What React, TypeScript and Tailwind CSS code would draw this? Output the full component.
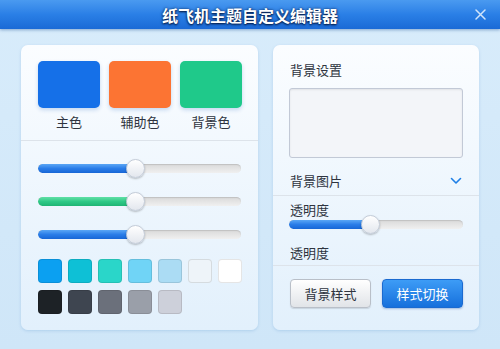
import React from "react";

const font = { fontFamily: '"Noto Sans CJK SC", "Noto Sans", sans-serif' };

function Slider({ pct, color }: { pct: number; color: "blue" | "green" }) {
  const fill =
    color === "blue"
      ? "bg-gradient-to-b from-[#5aa6f5] via-[#2a7de8] to-[#1766d6]"
      : "bg-gradient-to-b from-[#5fe0a6] via-[#2fc987] to-[#1fb574]";
  return (
    <div className="relative h-[19px] w-full flex items-center">
      <div className="relative h-[9px] w-full rounded-full bg-gradient-to-b from-[#d9d9d9] to-[#f0f0f0] shadow-[inset_0_1px_1px_rgba(0,0,0,0.12)] overflow-hidden">
        <div className={`absolute left-0 top-0 h-full rounded-full ${fill}`} style={{ width: `${pct}%` }} />
      </div>
      <div
        className="absolute top-0 h-[19px] w-[19px] -ml-[9.5px] rounded-full border border-[#c4ccd8] bg-gradient-to-b from-white to-[#e3e7ee] shadow-[0_1px_2px_rgba(0,0,0,0.25)]"
        style={{ left: `${pct}%` }}
      />
    </div>
  );
}

const row1 = ["#0ba0f1", "#0ec0d6", "#2ad6c9", "#70d4f6", "#abdcf4", "#eef4f9", "#ffffff"];
const row2 = ["#1d2226", "#3e4550", "#6b707b", "#9a9fa9", "#cdd0da"];

export default function App() {
  return (
    <div
      className="w-[500px] h-[349px] overflow-hidden flex flex-col bg-gradient-to-b from-[#d8ecfb] to-[#cfe6f8]"
      style={font}
    >
      {/* Title bar */}
      <div className="relative h-[29px] shrink-0 flex items-center justify-center bg-gradient-to-b from-[#4a9af0] via-[#2a7fe6] to-[#1a6ad6] shadow-[0_1px_3px_rgba(0,60,140,0.4)]">
        <span className="text-white font-bold text-[16px] leading-none [text-shadow:0_1px_2px_rgba(0,20,60,0.95),0_0_3px_rgba(0,20,60,0.7)]">
          纸飞机主题自定义编辑器
        </span>
        <svg className="absolute right-[14px] top-[9px]" width="11" height="11" viewBox="0 0 11 11">
          <path d="M1 1L10 10M10 1L1 10" stroke="#cfe4fb" strokeWidth="1.5" strokeLinecap="round" />
        </svg>
      </div>

      <div className="flex gap-[15px] pl-[21px] pt-[16px]">
        {/* Left panel */}
        <div className="w-[237px] h-[285px] rounded-[7px] bg-gradient-to-b from-[#fbfdff] to-[#e2f0fc] shadow-[0_1px_3px_rgba(80,140,200,0.25)] flex flex-col">
          <div className="flex gap-[9px] pl-[17px] pt-[16px]">
            {[
              { c: "bg-[#1570e8]", l: "主色" },
              { c: "bg-[#fc7433]", l: "辅助色" },
              { c: "bg-[#1fc98a]", l: "背景色" },
            ].map((s) => (
              <div key={s.l} className="flex flex-col items-center w-[62px]">
                <div className={`w-[62px] h-[47px] rounded-[5px] ${s.c} shadow-[0_2px_4px_rgba(0,80,180,0.2)]`} />
                <span className="mt-[5px] text-[13px] leading-[18px] text-[#2e3440]">{s.l}</span>
              </div>
            ))}
          </div>
          <div className="mt-[9px] h-px bg-[#dde3ea]" />
          <div className="flex flex-col gap-[14px] px-[17px] mt-[18px]">
            <Slider pct={48} color="blue" />
            <Slider pct={48} color="green" />
            <Slider pct={48} color="blue" />
          </div>
          <div className="flex flex-col gap-[7px] pl-[17px] mt-[15px]">
            <div className="flex gap-[6px]">
              {row1.map((c) => (
                <div key={c} className="w-[24px] h-[24px] rounded-[4px] border border-black/10" style={{ backgroundColor: c }} />
              ))}
            </div>
            <div className="flex gap-[6px]">
              {row2.map((c) => (
                <div key={c} className="w-[24px] h-[24px] rounded-[4px] border border-black/10" style={{ backgroundColor: c }} />
              ))}
            </div>
          </div>
        </div>

        {/* Right panel */}
        <div className="w-[206px] h-[285px] rounded-[7px] bg-gradient-to-b from-[#fbfdff] to-[#e2f0fc] shadow-[0_1px_3px_rgba(80,140,200,0.25)] flex flex-col">
          <div className="px-[16px] pt-[15px]">
            <div className="pl-[1px] text-[13px] leading-[20px] text-[#2e3440]">背景设置</div>
            <div className="mt-[8px] h-[70px] rounded-[3px] border border-[#c2c9d6] bg-[#f3f5f9] shadow-[inset_0_1px_2px_rgba(0,0,0,0.08)]" />
            <div className="mt-[13px] flex items-center justify-between pl-[1px]">
              <span className="text-[13px] leading-[20px] text-[#2e3440]">背景图片</span>
              <svg width="12" height="8" viewBox="0 0 12 8" className="mr-[1px]">
                <path d="M1.5 1.5L6 6L10.5 1.5" fill="none" stroke="#1e7fe6" strokeWidth="1.6" strokeLinecap="round" strokeLinejoin="round" />
              </svg>
            </div>
          </div>
          <div className="mt-[4px] h-px bg-[#dde3ea]" />
          <div className="px-[16px]">
            <div className="mt-[4px] pl-[1px] text-[13px] leading-[20px] text-[#2e3440]">透明度</div>
            <div className="-mt-[5px]">
              <Slider pct={47} color="blue" />
            </div>
            <div className="mt-[9px] pl-[1px] text-[13px] leading-[20px] text-[#2e3440]">透明度</div>
          </div>
          <div className="mt-[2px] h-px bg-[#dde3ea]" />
          <div className="flex gap-[11px] pl-[17px] mt-[13px]">
            <button className="w-[81px] h-[29px] rounded-[4px] border border-[#b9bfc8] bg-gradient-to-b from-[#ffffff] to-[#e1e4e8] text-[13px] text-[#2e3440] shadow-[0_1px_1px_rgba(0,0,0,0.12)]">
              背景样式
            </button>
            <button className="w-[81px] h-[29px] rounded-[4px] border border-[#1a6ad0] bg-gradient-to-b from-[#3d9cf6] to-[#1670dc] text-[13px] text-white shadow-[0_1px_2px_rgba(0,60,160,0.3)]">
              样式切换
            </button>
          </div>
        </div>
      </div>
    </div>
  );
}
